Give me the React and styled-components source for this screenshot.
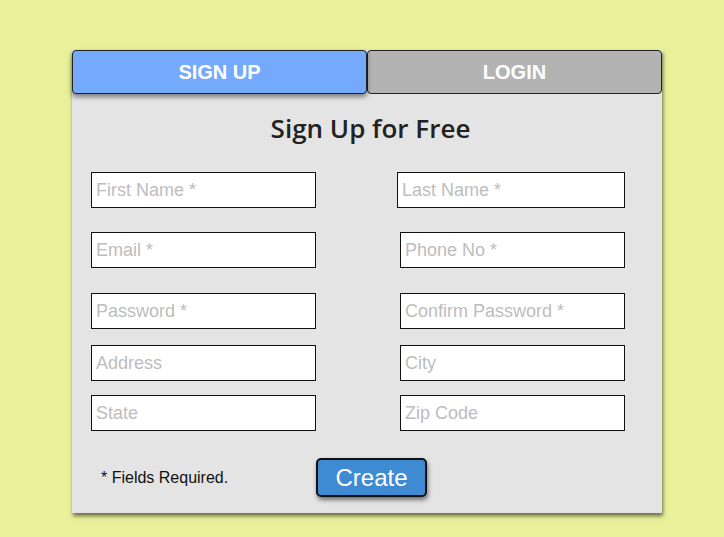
import React from "react";
import styled, { createGlobalStyle } from "styled-components";

const GlobalStyle = createGlobalStyle`
  html, body {
    margin: 0;
    padding: 0;
    background: #e8f19a;
    font-family: "Liberation Sans", Arial, sans-serif;
  }
`;

const rows = [
  { mt: 0, left: "First Name *", right: "Last Name *", shift: -3 },
  { mt: 24, left: "Email *", right: "Phone No *" },
  { mt: 25, left: "Password *", right: "Confirm Password *" },
  { mt: 16, left: "Address", right: "City" },
  { mt: 14, left: "State", right: "Zip Code" },
];

export default function App() {
  return (
    <Page>
      <GlobalStyle />
      <Card>
        <Tabs>
          <Tab $active>SIGN UP</Tab>
          <Tab>LOGIN</Tab>
        </Tabs>
        <Title>Sign Up for Free</Title>
        <Fields>
          {rows.map((r) => (
            <Row key={r.left} $mt={r.mt}>
              <Input placeholder={r.left} />
              <Input placeholder={r.right} $shift={r.shift || 0} />
            </Row>
          ))}
        </Fields>
        <Footer>
          <Note>* Fields Required.</Note>
          <CreateButton>Create</CreateButton>
        </Footer>
      </Card>
    </Page>
  );
}

const Page = styled.div`
  width: 724px;
  height: 537px;
  padding: 50px 0 0 72px;
  box-sizing: border-box;
`;

const Card = styled.div`
  width: 590px;
  background: #e4e4e4;
  box-shadow: 1px 3px 4px rgba(0, 0, 0, 0.55);
  display: flex;
  flex-direction: column;
`;

const Tabs = styled.div`
  display: flex;
  height: 44px;
`;

const Tab = styled.div`
  flex: 1;
  display: flex;
  align-items: center;
  justify-content: center;
  border: 1px solid #222;
  border-radius: 4px;
  background: ${(p) => (p.$active ? "#75a9fc" : "#b3b3b3")};
  box-shadow: ${(p) => (p.$active ? "0 3px 5px rgba(0,0,0,0.45)" : "none")};
  position: relative;
  z-index: ${(p) => (p.$active ? 1 : 0)};
  color: #fff;
  font-weight: bold;
  font-size: 20px;
`;

const Title = styled.h1`
  margin: 0;
  padding: 16px 0 0 7px;
  height: 78px;
  box-sizing: border-box;
  text-align: center;
  font-family: "Open Sans", "Noto Sans", sans-serif;
  font-weight: 600;
  font-size: 26px;
  line-height: 36px;
  color: #222;
`;

const Fields = styled.div`
  display: flex;
  flex-direction: column;
  padding: 0 0 0 19px;
`;

const Row = styled.div`
  display: flex;
  gap: 84px;
  margin-top: ${(p) => p.$mt}px;
`;

const Input = styled.input`
  height: 36px;
  box-sizing: border-box;
  border: 1px solid #111;
  background: #fff;
  padding: 0 4px;
  font-family: "Liberation Sans", Arial, sans-serif;
  font-size: 18px;
  margin-left: ${(p) => p.$shift || 0}px;
  width: ${(p) => 225 - (p.$shift || 0)}px;
  outline: none;
  &::placeholder {
    color: #bdbdbd;
  }
`;

const Footer = styled.div`
  display: flex;
  align-items: center;
  padding: 27px 0 16px 29px;
`;

const Note = styled.span`
  font-size: 16px;
  color: #111;
  width: 215px;
`;

const CreateButton = styled.button`
  width: 111px;
  height: 39px;
  background: #3f8bd3;
  border: 2px solid #111;
  border-radius: 5px;
  box-shadow: 1px 3px 4px rgba(0, 0, 0, 0.5);
  color: #fff;
  font-family: "Liberation Sans", Arial, sans-serif;
  font-size: 24px;
  padding: 0;
  cursor: pointer;
`;
